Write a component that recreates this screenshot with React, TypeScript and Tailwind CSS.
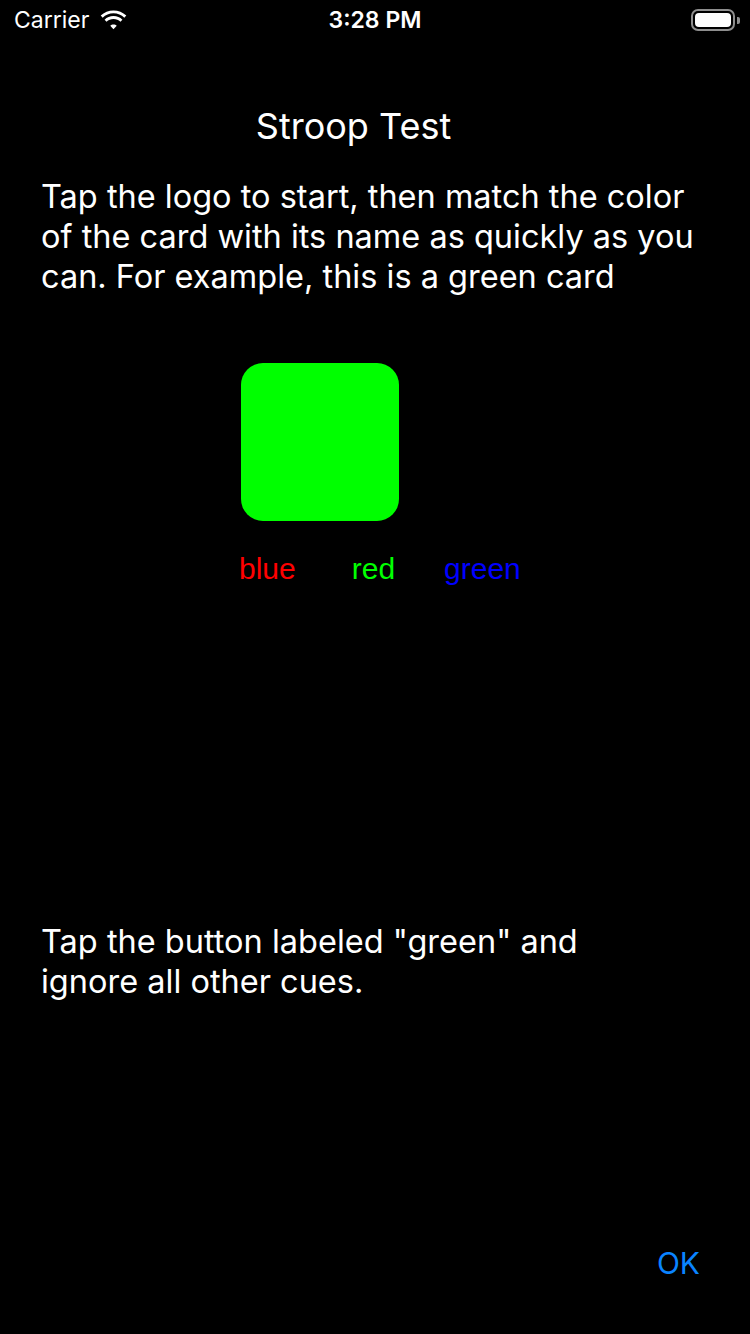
import React from "react";

const sf = { fontFamily: "Inter, 'Noto Sans', sans-serif" };

function Wifi() {
  return (
    <svg width="29" height="21" viewBox="0 0 26 20" fill="white">
      <path d="M13 3.2c4 0 7.6 1.5 10.3 4.1l1.9-2C21.9 2.2 17.6.4 13 .4S4.1 2.2.8 5.3l1.9 2C5.4 4.7 9 3.2 13 3.2z" />
      <path d="M13 8.6c2.6 0 4.9 1 6.6 2.6l1.9-2C19.3 7.1 16.3 5.8 13 5.8s-6.3 1.3-8.5 3.4l1.9 2c1.7-1.6 4-2.6 6.6-2.6z" />
      <path d="M13 13.9c1.2 0 2.3.5 3.1 1.2L13 18.4l-3.1-3.3c.8-.7 1.9-1.2 3.1-1.2z" />
    </svg>
  );
}

function Battery() {
  return (
    <div className="flex items-center">
      <div className="w-[44px] h-[22px] rounded-[7px] border-[2px] border-[#8e8e8e] p-[2px]">
        <div className="w-full h-full rounded-[4px] bg-white" />
      </div>
      <div className="w-[3px] h-[7px] rounded-r-[2px] bg-[#8e8e8e] ml-[2px]" />
    </div>
  );
}

export default function App() {
  return (
    <div className="w-[750px] h-[1334px] bg-black text-white flex flex-col" style={sf}>
      <div className="relative h-[40px] flex items-center px-[14px]">
        <div className="flex items-center gap-[10px]">
          <span className="text-[23px]">Carrier</span>
          <Wifi />
        </div>
        <div className="absolute left-0 right-0 top-0 h-[40px] flex items-center justify-center">
          <span className="text-[23px] font-semibold">3:28 PM</span>
        </div>
        <div className="ml-auto mr-[-4px]">
          <Battery />
        </div>
      </div>

      <div className="mt-[62px] pr-[43px] text-center text-[36px] leading-[48px]">Stroop Test</div>

      <div className="mt-[27px] px-[41px] text-[32.5px] leading-[40px]">
        Tap the logo to start, then match the color
        <br />
        of the card with its name as quickly as you
        <br />
        can. For example, this is a green card
      </div>

      <div className="mt-[66px] ml-[241px] w-[158px] h-[158px] rounded-[22px] bg-[#00ff00]" />

      <div
        className="mt-[28px] flex text-[30px] leading-[40px]"
        style={{ fontFamily: "'Liberation Sans', Arial, sans-serif" }}
      >
        <span className="ml-[239px] text-[#ff0000]">blue</span>
        <span className="ml-[56px] text-[#00ff00]">red</span>
        <span className="ml-[49px] text-[#0000ff]">green</span>
      </div>

      <div className="mt-[333px] px-[41px] text-[32.5px] leading-[40px]">
        Tap the button labeled "green" and
        <br />
        ignore all other cues.
      </div>

      <div className="mt-auto mb-[48px] flex justify-end pr-[50px]">
        <span className="text-[30px] text-[#0a84ff]">OK</span>
      </div>
    </div>
  );
}
